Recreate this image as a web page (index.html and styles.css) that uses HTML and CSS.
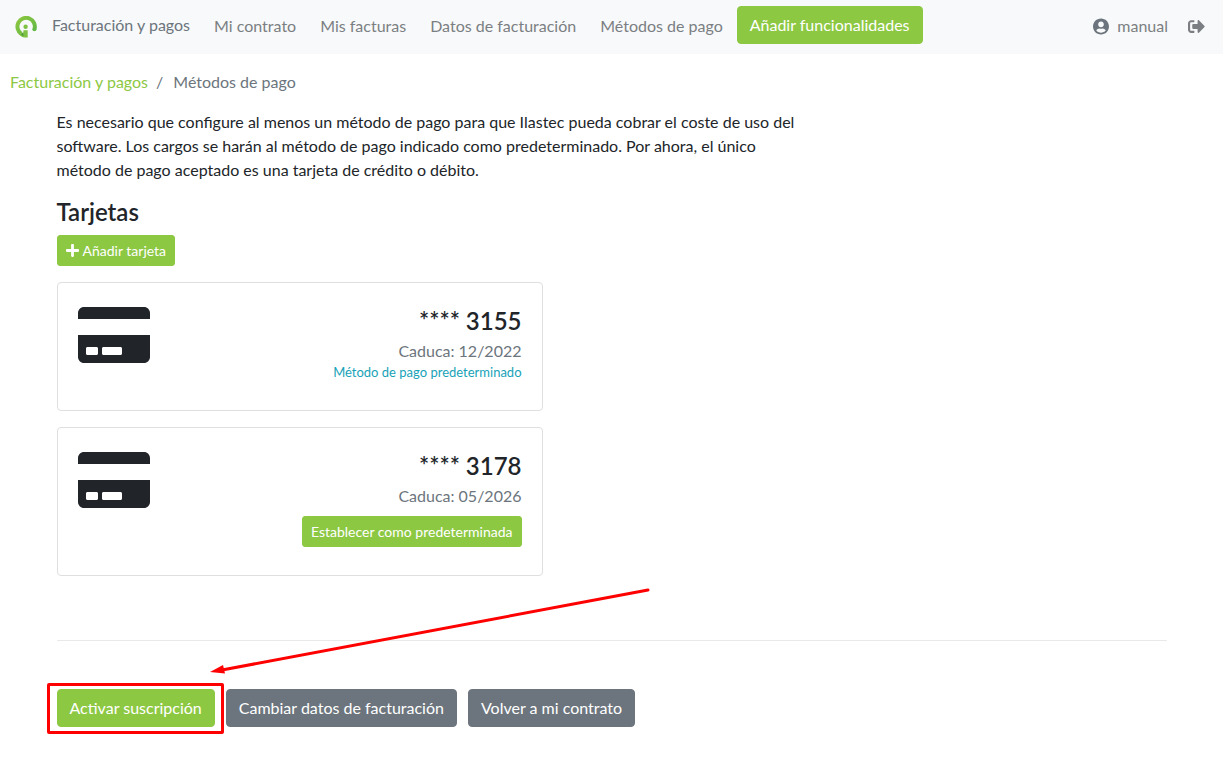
FILE: index.html
```html
<!DOCTYPE html>
<html lang="es">
<head>
<meta charset="utf-8">
<meta name="viewport" content="width=device-width, initial-scale=1">
<title>Métodos de pago</title>
<link rel="stylesheet" href="styles.css">
</head>
<body>
<header class="navbar">
  <a class="brand" href="#">
    <svg class="logo" viewBox="0 0 22 22" aria-hidden="true">
      <defs><linearGradient id="g" x1="0" x2="1" y1="0" y2="1"><stop offset="0" stop-color="#8cc63f"/><stop offset="1" stop-color="#5fb847"/></linearGradient></defs>
      <path d="M6.300 17.800A8.700 8.700 0 1 1 19.500 13" fill="none" stroke="url(#g)" stroke-width="4"/>
      <circle cx="19.400" cy="13.200" r="2" fill="#63b946"/>
      <path d="M5 15.500 8.400 17.500V14.200H12.700V21.500H10C7.500 21.300 5 20 3.800 18Z" fill="#7dc242"/>
      <path d="M8.400 16V20.500L6 18.500Z" fill="#4f9a38"/>
      <circle cx="10.600" cy="10.700" r="2.200" fill="#7dc242"/>
    </svg>
    <span>Facturación y pagos</span>
  </a>
  <nav class="nav-links">
    <a href="#">Mi contrato</a>
    <a href="#">Mis facturas</a>
    <a href="#">Datos de facturación</a>
    <a href="#">Métodos de pago</a>
  </nav>
  <button class="btn btn-green" type="button">Añadir funcionalidades</button>
  <div class="session">
    <a class="user" href="#">
      <svg class="icon-user" viewBox="0 0 496 512" aria-hidden="true"><path fill="currentColor" d="M248 8C111 8 0 119 0 256s111 248 248 248 248-111 248-248S385 8 248 8zm0 96c48.600 0 88 39.400 88 88s-39.400 88-88 88-88-39.400-88-88 39.400-88 88-88zm0 344c-58.700 0-111.300-26.600-146.500-68.200 18.800-35.400 55.600-59.800 98.500-59.800 2.400 0 4.800.4 7.100 1.100 13 4.200 26.600 6.900 40.900 6.900 14.300 0 28-2.700 40.900-6.900 2.300-.7 4.700-1.100 7.100-1.100 42.900 0 79.700 24.400 98.500 59.800C359.300 421.400 306.700 448 248 448z"/></svg>
      <span>manual</span>
    </a>
    <a class="logout" href="#" aria-label="Salir">
      <svg class="icon-out" viewBox="0 0 512 512" aria-hidden="true"><path fill="currentColor" d="M497 273L329 441c-15 15-41 4.500-41-17v-96H152c-13.300 0-24-10.700-24-24v-96c0-13.300 10.700-24 24-24h136V88c0-21.400 25.900-32 41-17l168 168c9.300 9.400 9.300 24.600 0 34zM192 436v-40c0-6.600-5.400-12-12-12H96c-17.700 0-32-14.300-32-32V160c0-17.700 14.300-32 32-32h84c6.600 0 12-5.400 12-12V76c0-6.600-5.400-12-12-12H96c-53 0-96 43-96 96v192c0 53 43 96 96 96h84c6.600 0 12-5.400 12-12z"/></svg>
    </a>
  </div>
</header>

<nav class="breadcrumb" aria-label="Ruta">
  <a href="#">Facturación y pagos</a>
  <span class="separator">/</span>
  <span>Métodos de pago</span>
</nav>

<main class="container">
  <p class="intro">Es necesario que configure al menos un método de pago para que Ilastec pueda cobrar el coste de uso del software. Los cargos se harán al método de pago indicado como predeterminado. Por ahora, el único método de pago aceptado es una tarjeta de crédito o débito.</p>

  <h1 class="title">Tarjetas</h1>
  <button class="btn btn-green btn-small" type="button">
    <svg class="icon-plus" viewBox="0 0 448 512" aria-hidden="true"><path fill="currentColor" d="M416 208H272V64c0-17.700-14.300-32-32-32h-32c-17.700 0-32 14.300-32 32v144H32c-17.700 0-32 14.300-32 32v32c0 17.700 14.300 32 32 32h144v144c0 17.700 14.300 32 32 32h32c17.700 0 32-14.300 32-32V304h144c17.700 0 32-14.300 32-32v-32c0-17.700-14.300-32-32-32z"/></svg>
    Añadir tarjeta
  </button>

  <section class="cards">
    <article class="card">
      <svg class="icon-card" viewBox="0 0 576 512" aria-hidden="true"><path fill="currentColor" d="M0 432c0 26.500 21.500 48 48 48h480c26.500 0 48-21.500 48-48V256H0v176zm192-68c0-6.600 5.400-12 12-12h136c6.600 0 12 5.400 12 12v40c0 6.600-5.400 12-12 12H204c-6.600 0-12-5.400-12-12v-40zm-128 0c0-6.600 5.400-12 12-12h72c6.600 0 12 5.400 12 12v40c0 6.600-5.400 12-12 12H76c-6.600 0-12-5.400-12-12v-40zM576 80v48H0V80c0-26.500 21.500-48 48-48h480c26.500 0 48 21.500 48 48z"/></svg>
      <div class="card-info">
        <h2 class="card-number">**** 3155</h2>
        <p class="expiry">Caduca: 12/2022</p>
        <p class="default-note">Método de pago predeterminado</p>
      </div>
    </article>
    <article class="card">
      <svg class="icon-card" viewBox="0 0 576 512" aria-hidden="true"><path fill="currentColor" d="M0 432c0 26.500 21.500 48 48 48h480c26.500 0 48-21.500 48-48V256H0v176zm192-68c0-6.600 5.400-12 12-12h136c6.600 0 12 5.400 12 12v40c0 6.600-5.400 12-12 12H204c-6.600 0-12-5.400-12-12v-40zm-128 0c0-6.600 5.400-12 12-12h72c6.600 0 12 5.400 12 12v40c0 6.600-5.400 12-12 12H76c-6.600 0-12-5.400-12-12v-40zM576 80v48H0V80c0-26.500 21.500-48 48-48h480c26.500 0 48 21.500 48 48z"/></svg>
      <div class="card-info">
        <h2 class="card-number">**** 3178</h2>
        <p class="expiry">Caduca: 05/2026</p>
        <button class="btn btn-green btn-small set-default" type="button">Establecer como predeterminada</button>
      </div>
    </article>
  </section>

  <hr class="divider">

  <div class="actions">
    <div class="marked">
      <button class="btn btn-green" type="button">Activar suscripción</button>
      <span class="mark"></span>
      <svg class="arrow" viewBox="0 0 440 86" aria-hidden="true">
        <path d="M438 2 12 82" fill="none" stroke="#f00" stroke-width="3" stroke-linecap="round"/>
        <path d="M0 84 13 77 15 85.500Z" fill="#f00"/>
      </svg>
    </div>
    <button class="btn btn-gray" type="button">Cambiar datos de facturación</button>
    <button class="btn btn-gray" type="button">Volver a mi contrato</button>
  </div>
</main>
</body>
</html>
```
FILE: styles.css
```css
* { box-sizing: border-box; }

body {
  margin: 0;
  background: #fff;
  color: #212529;
  font-family: Lato, "Liberation Sans", sans-serif;
  font-size: 16px;
  line-height: 24px;
}

h1, h2, p { margin: 0; }
a { color: inherit; text-decoration: none; }
svg { display: block; }

.navbar {
  display: flex;
  align-items: center;
  padding: 6px 18px 10px 15px;
  background: #f8f9fa;
  color: #7b7f83;
}

.brand {
  display: flex;
  align-items: center;
  gap: 15px;
  color: #6c757d;
}
.logo { width: 22px; height: 22px; margin-top: 3px; }

.nav-links {
  display: flex;
  gap: 24px;
  margin: 2px 14px 0 24px;
}

.session {
  display: flex;
  align-items: center;
  gap: 20px;
  margin: 2px 0 0 auto;
}
.user { display: flex; align-items: center; gap: 8px; }
.icon-user { width: 16px; height: 17px; color: #6c757d; }
.icon-out { width: 17px; height: 17px; }

.btn {
  padding: 6px 12px;
  border: 1px solid transparent;
  border-radius: 4px;
  color: #fff;
  font: inherit;
  cursor: pointer;
}
.btn-green { background: #8dc843; border-color: #8dc843; }
.btn-gray { background: #6c757d; border-color: #6c757d; }
.btn-small {
  display: flex;
  align-items: center;
  gap: 4px;
  padding: 4px 8px;
  border-radius: 3px;
  font-size: 14px;
  line-height: 21px;
}
.icon-plus { width: 13px; height: 15px; }

.breadcrumb {
  display: flex;
  gap: 8px;
  padding: 16px 10px;
  color: #6c757d;
}
.breadcrumb a { color: #8dc843; }
.separator { margin-right: 2px; }

.container {
  max-width: 1140px;
  margin: 0 auto;
  padding: 0 15px 38px;
}
.intro { max-width: 746px; }
.title {
  margin: 15px 0 9px;
  font-size: 24px;
  font-weight: 600;
  line-height: 29px;
}

.cards {
  display: grid;
  gap: 16px;
  max-width: 486px;
  margin-top: 16px;
}
.card {
  display: flex;
  justify-content: space-between;
  padding: 20px 20px 28px;
  border: 1px solid #dfdfdf;
  border-radius: 4px;
}
.icon-card { width: 72px; height: 64px; }
.card-info {
  display: flex;
  flex-direction: column;
  align-items: flex-end;
  padding-top: 3px;
}
.card-number {
  margin-bottom: 4px;
  font-size: 24px;
  font-weight: 600;
  line-height: 29px;
}
.expiry { color: #6c757d; }
.default-note {
  color: #17a2b8;
  font-size: 13px;
  line-height: 19px;
}
.set-default { margin-top: 8px; }

.divider {
  margin: 64px 0 48px;
  border: 0;
  border-top: 1px solid #e9e9e9;
}

.actions { display: flex; gap: 11px; }
.marked { position: relative; }
.mark {
  position: absolute;
  inset: -6px -9px -7px -10px;
  border: 3px solid #f00;
  border-radius: 2px;
  pointer-events: none;
}
.arrow {
  position: absolute;
  left: 153px;
  bottom: 53px;
  width: 440px;
  height: 86px;
  pointer-events: none;
}
```
